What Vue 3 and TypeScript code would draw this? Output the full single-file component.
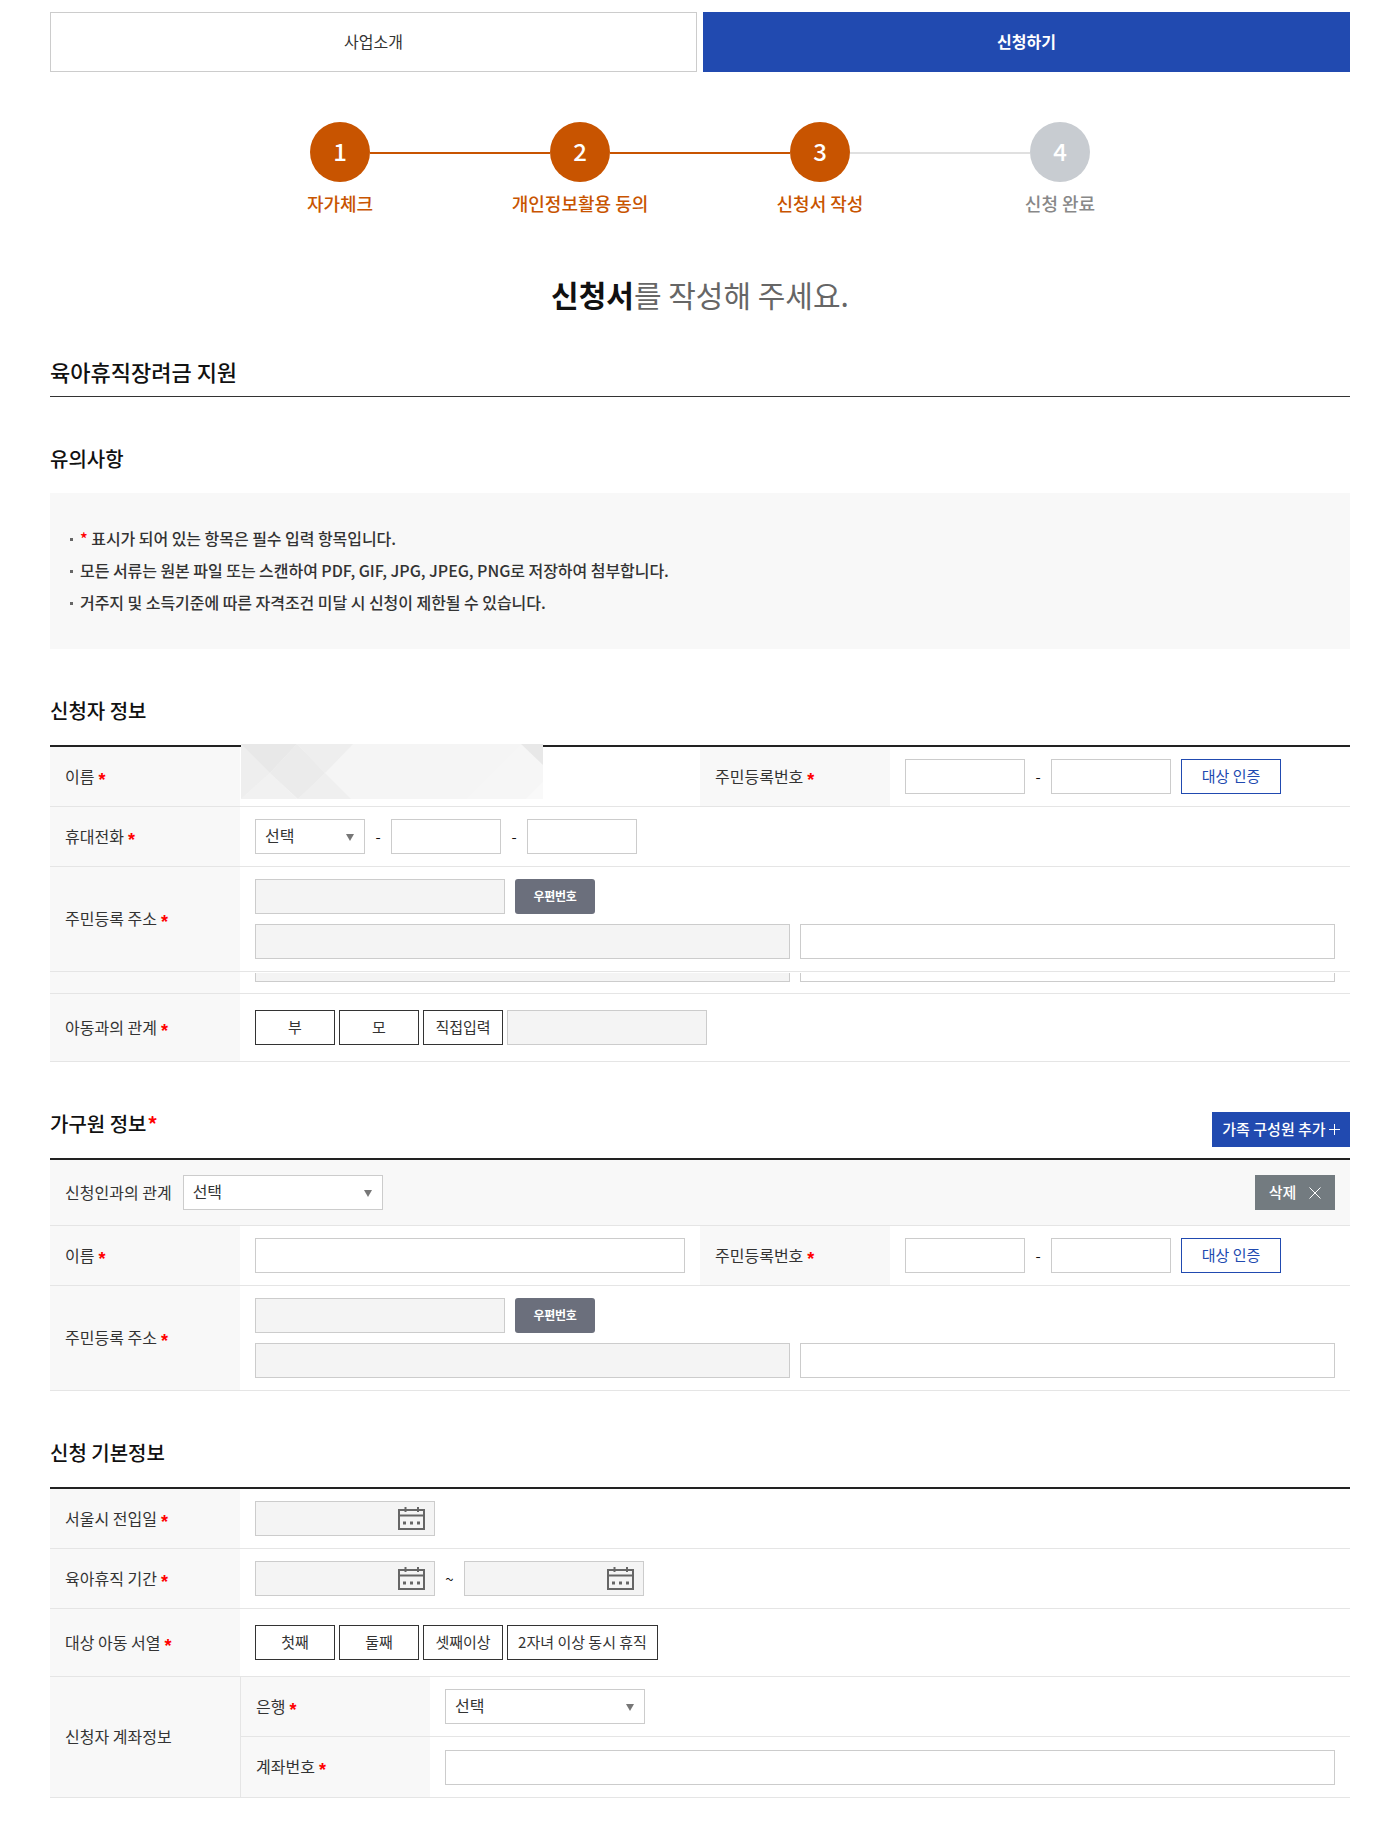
<script setup lang="ts">
const steps = [
  { n: 1, label: '자가체크', on: true },
  { n: 2, label: '개인정보활용 동의', on: true },
  { n: 3, label: '신청서 작성', on: true },
  { n: 4, label: '신청 완료', on: false },
]
const relation = ['부', '모', '직접입력']
const order = ['첫째', '둘째', '셋째이상']
</script>

<template>
  <div class="page">
    <div class="tabs">
      <a class="tab">사업소개</a>
      <a class="tab active">신청하기</a>
    </div>

    <ol class="steps">
      <li v-for="(s, i) in steps" :key="s.n" class="step" :class="{ on: s.on }">
        <div class="track">
          <span class="seg" :class="{ hidden: i === 0, lit: s.on }"></span>
          <span class="circle">{{ s.n }}</span>
          <span class="seg" :class="{ hidden: i === steps.length - 1, lit: i < 2 }"></span>
        </div>
        <span class="step-label">{{ s.label }}</span>
      </li>
    </ol>

    <h1 class="title"><strong>신청서</strong>를 작성해 주세요.</h1>

    <h2 class="program">육아휴직장려금 지원</h2>

    <h3 class="head">유의사항</h3>
    <ul class="notice">
      <li><em>*</em> 표시가 되어 있는 항목은 필수 입력 항목입니다.</li>
      <li>모든 서류는 원본 파일 또는 스캔하여 PDF, GIF, JPG, JPEG, PNG로 저장하여 첨부합니다.</li>
      <li>거주지 및 소득기준에 따른 자격조건 미달 시 신청이 제한될 수 있습니다.</li>
    </ul>

    <h3 class="head spaced">신청자 정보</h3>
    <div class="table">
      <div class="row">
        <div class="th">이름<i>*</i></div>
        <div class="td grow"></div>
        <svg class="mask" width="302" height="55" viewBox="0 0 302 55" aria-hidden="true">
          <rect width="302" height="55" fill="#f5f5f5" />
          <polygon points="225,55 280,0 302,21 302,55" fill="#f6f6f6" />
          <polygon points="285,55 302,38 302,55" fill="#f9f9f9" />
          <polygon points="280,0 302,0 302,21" fill="#e8e8e8" />
          <polygon points="0,0 29,29 0,55" fill="#eeeeee" />
          <polygon points="0,55 29,29 56,55" fill="#f1f1f1" />
          <polygon points="0,0 56,0 29,29" fill="#e8e8e8" />
          <polygon points="56,0 84,29 57,55 29,29" fill="#ebebeb" />
          <polygon points="56,0 112,0 84,29" fill="#eeeeee" />
          <polygon points="84,29 110,55 57,55" fill="#efefef" />
        </svg>
        <div class="th">주민등록번호<i>*</i></div>
        <div class="td id-cell">
          <input class="w120" type="text" />
          <span class="sep id-sep">-</span>
          <input class="w120" type="text" />
          <button class="verify" type="button">대상 인증</button>
        </div>
      </div>
      <div class="row">
        <div class="th">휴대전화<i>*</i></div>
        <div class="td">
          <div class="select w110"><select><option>선택</option></select></div>
          <span class="sep phone-sep">-</span>
          <input class="w110" type="text" />
          <span class="sep phone-sep">-</span>
          <input class="w110" type="text" />
        </div>
      </div>
      <div class="row">
        <div class="th">주민등록 주소<i>*</i></div>
        <div class="td stack">
          <div class="line">
            <input class="w250 off" type="text" disabled />
            <button class="post" type="button">우편번호</button>
          </div>
          <div class="line">
            <input class="w535 off" type="text" disabled />
            <input class="w535" type="text" />
          </div>
        </div>
      </div>
      <div class="row sliver">
        <div class="th"></div>
        <div class="td sliver-td">
          <span class="w535 cut off"></span>
          <span class="w535 cut"></span>
        </div>
      </div>
      <div class="row tall">
        <div class="th">아동과의 관계<i>*</i></div>
        <div class="td tight">
          <button v-for="r in relation" :key="r" class="choice" type="button">{{ r }}</button>
          <input class="w200 off" type="text" disabled />
        </div>
      </div>
    </div>

    <div class="head-row">
      <h3 class="head">가구원 정보<em>*</em></h3>
      <button class="add" type="button">
        가족 구성원 추가
        <svg width="11" height="11" viewBox="0 0 11 11" aria-hidden="true"><path d="M5.5 0v11M0 5.5h11" stroke="#fff" stroke-width="1" fill="none" /></svg>
      </button>
    </div>
    <div class="table">
      <div class="row band">
        <span class="band-label">신청인과의 관계</span>
        <div class="select w200"><select><option>선택</option></select></div>
        <button class="remove" type="button">
          삭제
          <svg width="12" height="12" viewBox="0 0 12 12" aria-hidden="true"><path d="M.5.5l11 11M11.5.5l-11 11" stroke="#fff" stroke-width="1" fill="none" /></svg>
        </button>
      </div>
      <div class="row">
        <div class="th">이름<i>*</i></div>
        <div class="td grow"><input class="w430" type="text" /></div>
        <div class="th">주민등록번호<i>*</i></div>
        <div class="td id-cell">
          <input class="w120" type="text" />
          <span class="sep id-sep">-</span>
          <input class="w120" type="text" />
          <button class="verify" type="button">대상 인증</button>
        </div>
      </div>
      <div class="row">
        <div class="th">주민등록 주소<i>*</i></div>
        <div class="td stack">
          <div class="line">
            <input class="w250 off" type="text" disabled />
            <button class="post" type="button">우편번호</button>
          </div>
          <div class="line">
            <input class="w535 off" type="text" disabled />
            <input class="w535" type="text" />
          </div>
        </div>
      </div>
    </div>

    <h3 class="head spaced">신청 기본정보</h3>
    <div class="table">
      <div class="row">
        <div class="th">서울시 전입일<i>*</i></div>
        <div class="td">
          <div class="date">
            <svg width="27" height="23" viewBox="0 0 27 23" aria-hidden="true">
              <path d="M1 3h25v19H1zM1 8.5h25M7.5 0v5M20 0v5" fill="none" stroke="#666" stroke-width="2" />
              <path d="M5 14.5h3v3H5zM12 14.5h3v3h-3zM19 14.5h3v3h-3z" fill="#666" />
            </svg>
          </div>
        </div>
      </div>
      <div class="row">
        <div class="th">육아휴직 기간<i>*</i></div>
        <div class="td">
          <div class="date">
            <svg width="27" height="23" viewBox="0 0 27 23" aria-hidden="true">
              <path d="M1 3h25v19H1zM1 8.5h25M7.5 0v5M20 0v5" fill="none" stroke="#666" stroke-width="2" />
              <path d="M5 14.5h3v3H5zM12 14.5h3v3h-3zM19 14.5h3v3h-3z" fill="#666" />
            </svg>
          </div>
          <span class="sep tilde">~</span>
          <div class="date">
            <svg width="27" height="23" viewBox="0 0 27 23" aria-hidden="true">
              <path d="M1 3h25v19H1zM1 8.5h25M7.5 0v5M20 0v5" fill="none" stroke="#666" stroke-width="2" />
              <path d="M5 14.5h3v3H5zM12 14.5h3v3h-3zM19 14.5h3v3h-3z" fill="#666" />
            </svg>
          </div>
        </div>
      </div>
      <div class="row tall">
        <div class="th">대상 아동 서열<i>*</i></div>
        <div class="td tight">
          <button v-for="o in order" :key="o" class="choice" type="button">{{ o }}</button>
          <button class="choice w150" type="button">2자녀 이상 동시 휴직</button>
        </div>
      </div>
      <div class="row split">
        <div class="th">신청자 계좌정보</div>
        <div class="nested">
          <div class="row">
            <div class="th sub">은행<i>*</i></div>
            <div class="td"><div class="select w200"><select><option>선택</option></select></div></div>
          </div>
          <div class="row">
            <div class="th sub">계좌번호<i>*</i></div>
            <div class="td"><input class="fill" type="text" /></div>
          </div>
        </div>
      </div>
    </div>
  </div>
</template>

<style>
html, body { background: #fff; }
</style>

<style scoped>
* { box-sizing: border-box; }
.page {
  width: 1300px;
  margin-left: 50px;
  padding: 12px 0 26px;
  font-family: "Noto Sans CJK KR", "Noto Sans", sans-serif;
  font-size: 16px;
  color: #333;
}
h1, h2, h3, ul, ol { margin: 0; padding: 0; list-style: none; font-weight: 500; }
em, i { font-style: normal; color: #f00; }

.tabs { display: flex; gap: 6px; }
.tab {
  flex: 1;
  height: 60px;
  padding-bottom: 2px;
  display: flex;
  align-items: center;
  justify-content: center;
  border: 1px solid #ccc;
  color: #333;
  font-size: 16px;
}
.tab.active { background: #214ab0; border-color: #214ab0; color: #fff; font-weight: 700; }

.steps { display: flex; justify-content: center; margin-top: 50px; }
.step { width: 240px; display: flex; flex-direction: column; align-items: center; color: #888; }
.step.on { color: #c85400; }
.track { display: flex; align-items: center; width: 100%; }
.seg { flex: 1; height: 2px; margin-top: 2px; background: #e0e0e0; }
.seg.lit { background: #c85400; }
.seg.hidden { visibility: hidden; }
.circle {
  width: 60px;
  height: 60px;
  padding-bottom: 4px;
  border-radius: 50%;
  display: flex;
  align-items: center;
  justify-content: center;
  background: #c8ccd1;
  color: #fff;
  font-size: 24px;
  font-weight: 500;
}
.step.on .circle { background: #c85400; }
.step-label { margin: 9px 0 1px; font-size: 18px; line-height: 24px; }

.title { margin-top: 57px; padding-bottom: 2px; text-align: center; font-size: 30px; line-height: 42px; font-weight: 400; color: #666; }
.title strong { font-weight: 700; color: #111; }

.program {
  margin-top: 39px;
  height: 41px;
  border-bottom: 1px solid #333;
  font-size: 22px;
  line-height: 30px;
  color: #111;
}
.head { margin-top: 47px; font-size: 20px; line-height: 30px; color: #111; }
.head.spaced { margin-bottom: 19px; }

.notice { margin-top: 19px; padding: 30px 0; background: #f8f8f8; color: #333; letter-spacing: -0.05px; }
.notice li { position: relative; padding: 0 0 2px 30px; line-height: 30px; }
.notice li::before {
  content: "";
  position: absolute;
  left: 20px;
  top: 15px;
  width: 3px;
  height: 3px;
  background: #666;
}

.table { border-top: 2px solid #222; }
.row { position: relative; display: flex; border-bottom: 1px solid #e5e5e5; }
.th {
  flex: none;
  width: 190px;
  padding: 0 0 2px 15px;
  display: flex;
  align-items: center;
  background: #f8f8f8;
  color: #333;
}
.th i {
  margin-left: 4px;
  font-family: "Liberation Sans", sans-serif;
  font-weight: 700;
  font-size: 18px;
  line-height: 1;
  transform: translateY(4px);
}
.td { flex: 1; min-width: 0; padding: 12px 15px; display: flex; align-items: center; }
.td.grow { flex: none; width: 460px; }
.td.stack { flex-direction: column; align-items: flex-start; gap: 10px; }
.td.tight { padding: 16px 15px; gap: 4px; }
.line { display: flex; align-items: center; gap: 10px; }

.mask { position: absolute; left: 191px; top: -3px; }

input, .cut, .date, .select select {
  height: 35px;
  border: 1px solid #ccc;
  background: #fff;
  border-radius: 0;
  outline: 0;
  font: inherit;
}
.off, .date { background: #f4f4f4; }
.w110 { width: 110px; }
.w120 { width: 120px; }
.w200 { width: 200px; }
.w250 { width: 250px; }
.w430 { width: 430px; }
.w535 { width: 535px; }
.fill { width: 100%; }

.sep { color: #111; font-size: 15px; text-align: center; }
.id-sep { width: 26px; }
.phone-sep { width: 26px; }
.tilde { width: 29px; }

.select { position: relative; display: block; }
.select select {
  width: 100%;
  padding: 0 0 3px 9px;
  appearance: none;
  color: #333;
}
.select::after {
  content: "";
  position: absolute;
  right: 11px;
  top: 15px;
  border-left: 4px solid transparent;
  border-right: 4px solid transparent;
  border-top: 7px solid #777;
}

button { font: inherit; cursor: pointer; border-radius: 0; padding: 0 0 2px; }
.verify {
  margin-left: 10px;
  width: 100px;
  height: 35px;
  border: 1px solid #214ab0;
  background: #fff;
  color: #214ab0;
  font-size: 15px;
}
.post {
  width: 80px;
  height: 35px;
  border: 0;
  border-radius: 3px;
  background: #6b6f7c;
  color: #fff;
  font-size: 12px;
  font-weight: 700;
  letter-spacing: -0.3px;
}
.choice {
  flex: none;
  width: 80px;
  height: 35px;
  border: 1px solid #333;
  background: #fff;
  color: #333;
  font-size: 15px;
}
.choice.w150 { width: 151px; }

.sliver { height: 22px; }
.td.sliver-td { padding: 1px 15px 0; align-items: flex-start; gap: 10px; }
.cut { display: block; height: 9px; border-top: 0; }

.head-row { display: flex; justify-content: space-between; align-items: flex-start; height: 96px; }
.head-row .head em { margin-left: 1px; font-weight: 700; }
.add {
  margin-top: 50px;
  width: 138px;
  height: 35px;
  display: flex;
  align-items: center;
  justify-content: center;
  gap: 3px;
  border: 0;
  background: #214ab0;
  color: #fff;
  font-size: 15px;
  font-weight: 500;
}
.add svg { margin-top: 2px; }

.band { height: 66px; padding: 0 15px; align-items: center; background: #f8f8f8; }
.band-label { margin-right: 11px; padding-bottom: 2px; }
.band .select { flex: none; }
.remove {
  margin-left: auto;
  width: 80px;
  height: 35px;
  display: flex;
  align-items: center;
  justify-content: center;
  gap: 13px;
  border: 0;
  background: #737b80;
  color: #fff;
  font-size: 15px;
  font-weight: 500;
}
.remove svg { margin-top: 2px; }

.date { width: 180px; display: flex; align-items: center; justify-content: flex-end; padding-right: 9px; }

.split { border-bottom: 1px solid #e5e5e5; }
.nested { flex: 1; border-left: 1px solid #e5e5e5; }
.nested .row:last-child { border-bottom: 0; }
.nested .row { height: 60px; }
.th.sub { width: 189px; padding-left: 15px; }
</style>
